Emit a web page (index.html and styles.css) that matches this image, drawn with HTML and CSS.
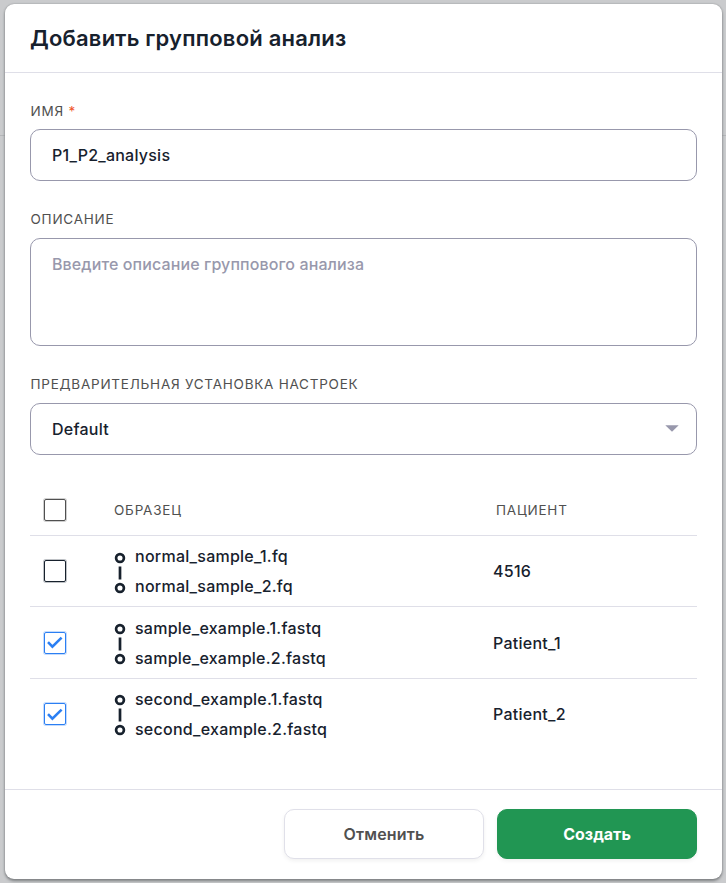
FILE: index.html
```html
<!DOCTYPE html>
<html lang="ru">
<head>
<meta charset="utf-8">
<title>Добавить групповой анализ</title>
<link rel="stylesheet" href="styles.css">
</head>
<body>
<form class="modal">
  <header class="modal-header"><h1>Добавить групповой анализ</h1></header>
  <main class="modal-body">
    <label class="label" for="name">ИМЯ <span class="required">*</span></label>
    <input class="control" id="name" value="P1_P2_analysis">
    <label class="label" for="description">ОПИСАНИЕ</label>
    <textarea class="control description" id="description" placeholder="Введите описание группового анализа"></textarea>
    <span class="label">ПРЕДВАРИТЕЛЬНАЯ УСТАНОВКА НАСТРОЕК</span>
    <div class="control select"><span>Default</span><svg width="14" height="7" viewBox="0 0 14 7"><path d="M.3.2h13.4L7 6.8z"/></svg></div>
    <section class="samples">
      <div class="row head"><span class="check muted"></span><span>ОБРАЗЕЦ</span><span>ПАЦИЕНТ</span></div>
      <div class="row">
        <span class="check"></span>
        <svg class="pair" width="12" height="42" viewBox="0 0 12 42"><circle cx="6" cy="6" r="3.9"/><path d="M6 14.5v13"/><circle cx="6" cy="36" r="3.9"/></svg>
        <div class="files"><span>normal_sample_1.fq</span><span>normal_sample_2.fq</span></div>
        <span>4516</span>
      </div>
      <div class="row second">
        <span class="check checked"><svg width="16" height="13" viewBox="0 0 16 13"><path d="M1 6.2 5.4 10.6 14.6 1.6"/></svg></span>
        <svg class="pair" width="12" height="42" viewBox="0 0 12 42"><circle cx="6" cy="6" r="3.9"/><path d="M6 14.5v13"/><circle cx="6" cy="36" r="3.9"/></svg>
        <div class="files"><span>sample_example.1.fastq</span><span>sample_example.2.fastq</span></div>
        <span>Patient_1</span>
      </div>
      <div class="row last">
        <span class="check checked"><svg width="16" height="13" viewBox="0 0 16 13"><path d="M1 6.2 5.4 10.6 14.6 1.6"/></svg></span>
        <svg class="pair" width="12" height="42" viewBox="0 0 12 42"><circle cx="6" cy="6" r="3.9"/><path d="M6 14.5v13"/><circle cx="6" cy="36" r="3.9"/></svg>
        <div class="files"><span>second_example.1.fastq</span><span>second_example.2.fastq</span></div>
        <span>Patient_2</span>
      </div>
    </section>
  </main>
  <footer class="modal-footer"><button type="button" class="button">Отменить</button><button type="button" class="button create">Создать</button></footer>
</form>
</body>
</html>
```
FILE: styles.css
```css
* { box-sizing: border-box; }
body {
  margin: 0;
  height: 883px;
  padding: 4px 4px 4px 5px;
  overflow: hidden;
  background: linear-gradient(#b5b6b9, #b5b6b9) 0 135px / 100% 1px no-repeat, #cacbcd;
  font: 500 16px/20px Inter, sans-serif;
  letter-spacing: .25px;
  color: #17212d;
}
.modal {
  display: flex;
  flex-direction: column;
  height: 875px;
  background: #fff;
  border-radius: 9px;
  box-shadow: 0 2px 3px #7e8083, 0 0 2px #929396;
}
.modal-header {
  height: 69px;
  padding: 20px 25px 0;
  border-bottom: 1px solid #dfdfe8;
}
h1 { margin: 0; font-size: 22px; line-height: 28px; font-weight: 600; letter-spacing: .2px; }
.modal-body {
  display: flex;
  flex-direction: column;
  flex: 1;
  padding: 30px 25px 0;
}
.label {
  height: 16px;
  margin-bottom: 11px;
  padding-left: .5px;
  font-size: 13.5px;
  line-height: 16px;
  font-weight: 400;
  letter-spacing: .76px;
  color: #505050;
}
.label:first-child { margin-bottom: 10px; }
.required { color: #f0562b; }
.control {
  width: 667px;
  height: 52px;
  margin: 0 0 30px;
  padding: 0 21px;
  border: 1px solid #9898ac;
  border-radius: 10px;
  background: #fff;
  font: inherit;
  letter-spacing: .24px;
  color: inherit;
}
.control::placeholder { color: #9898ac; opacity: 1; letter-spacing: .11px; }
.control.description { height: 108px; padding-top: 15px; line-height: 20px; resize: none; overflow: hidden; }
.select { display: flex; flex: none; align-items: center; justify-content: space-between; padding-right: 17px; }
.select svg { margin-top: -1px; fill: #9898ac; }
.samples { width: 667px; }
.row {
  display: grid;
  grid-template-columns: 84px 21px 358px 1fr;
  align-items: center;
  height: 71px;
  border-bottom: 1px solid #dfdfe8;
}
.row.second { height: 72px; }
.row.last { border-color: transparent; }
.row.head {
  grid-template-columns: 84px 382px 1fr;
  height: 51px;
  font-size: 13.5px;
  font-weight: 400;
  letter-spacing: .8px;
  color: #505050;
}
.check {
  --tone: #17212d;
  display: grid;
  place-items: center;
  width: 22px;
  height: 22px;
  margin-left: 14px;
  border: 1px solid var(--tone);
  border-radius: 2px;
  box-shadow: 0 0 0 1px color-mix(in srgb, var(--tone) 28%, transparent);
}
.check.muted { --tone: #505050; }
.check.checked { --tone: #2b7ff3; }
.check svg { fill: none; stroke: var(--tone); stroke-width: 2.6; }
.pair { margin-top: 4px; fill: none; stroke: #17212d; stroke-width: 2.7; }
.second .pair { margin-top: 3px; }
.last .pair { margin-top: 2px; }
.files { display: grid; line-height: 30px; }
.modal-footer {
  display: flex;
  gap: 13px;
  justify-content: flex-end;
  height: 90px;
  padding: 19px 25px;
  border-top: 1px solid #dfdfe8;
}
.button {
  width: 200px;
  height: 50px;
  border: 1px solid #e0e0e9;
  border-radius: 10px;
  background: #fff;
  box-shadow: 0 2px 4px #0000000f;
  font: 600 16px/20px Inter, sans-serif;
  letter-spacing: .2px;
  color: #505050;
}
.create { border-color: #219653; background: #219653; font-weight: 700; letter-spacing: 0; color: #fff; }
```
